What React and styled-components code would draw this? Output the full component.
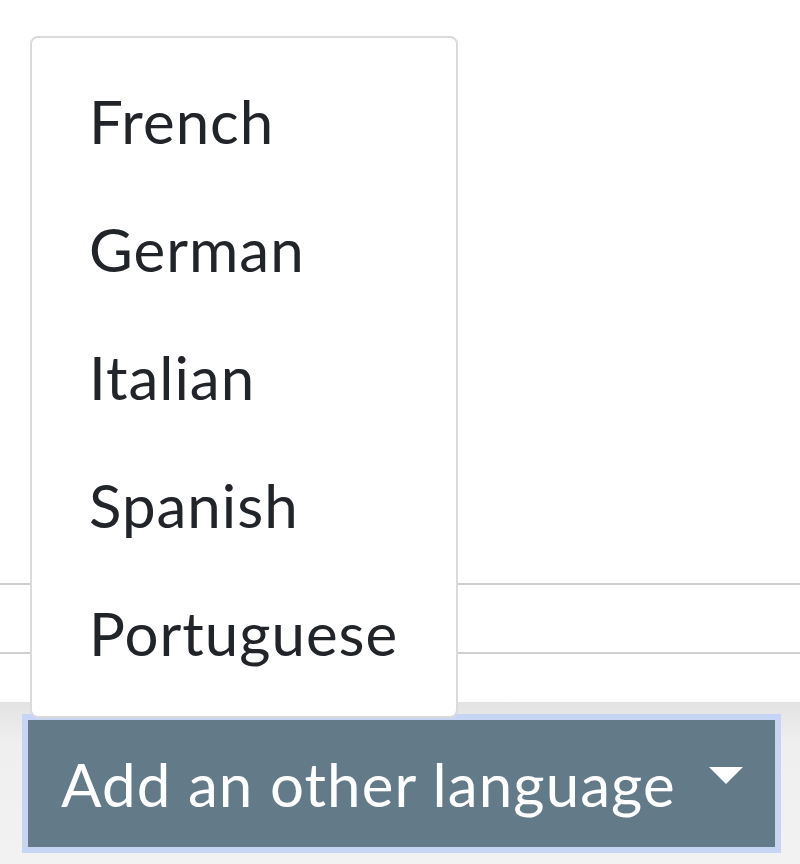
import React from 'react'
import styled, { createGlobalStyle } from 'styled-components'

/* Page reset: no body margin, one font for the whole screen */
const GlobalStyle = createGlobalStyle`
  html, body {
    margin: 0;
    padding: 0;
    background: #ffffff;
  }
  body {
    font-family: Lato, "Noto Sans", "Liberation Sans", sans-serif;
  }
`

const Page = styled.div`
  display: flex;
  flex-direction: column;
  height: 864px;
  overflow: hidden;
  background: #ffffff;
`

/* Table rows of the form behind the open menu */
const Content = styled.div`
  flex: 1;
  display: flex;
  flex-direction: column;
  justify-content: flex-end;
  padding-bottom: 48px;
`

const Row = styled.div`
  height: 67px;
  border-top: 2px solid #d0d0d0;
  border-bottom: 2px solid #d0d0d0;
`

/* Grey band at the bottom holding the dropdown button */
const Footer = styled.div`
  height: 162px;
  box-sizing: border-box;
  padding: 18px 25px 17px 28px;
  background: linear-gradient(to bottom, #e3e3e3 0%, #efefef 25%, #f2f2f2 100%);
`

const Dropdown = styled.div`
  position: relative;
  height: 100%;
`

const Toggle = styled.button`
  display: flex;
  align-items: center;
  justify-content: space-between;
  width: 100%;
  height: 100%;
  box-sizing: border-box;
  padding: 0 32px 0 33px;
  border: none;
  border-radius: 0;
  background: #637a88;
  box-shadow: 0 0 0 6px #c6d5f4;
  color: #ffffff;
  font-family: inherit;
  font-size: 60px;
  font-weight: 400;
  letter-spacing: 1.1px;
  cursor: pointer;
  outline: none;
`

const Caret = styled.span`
  width: 0;
  height: 0;
  border-left: 17px solid transparent;
  border-right: 17px solid transparent;
  border-top: 17px solid #ffffff;
  margin-top: -16px;
`

/* The open menu sits over the rows and the band */
const Menu = styled.ul`
  position: absolute;
  left: 2px;
  bottom: calc(100% + 2px);
  width: 428px;
  box-sizing: border-box;
  margin: 0;
  padding: 19px 0;
  list-style: none;
  background: #ffffff;
  border: 2px solid #dadada;
  border-radius: 8px;
  z-index: 2;
`

const Item = styled.li`
  display: flex;
  align-items: center;
  height: 128px;
  padding-left: 57px;
  color: #212529;
  font-size: 60px;
  letter-spacing: 1px;
  cursor: pointer;
`

const languages = ['French', 'German', 'Italian', 'Spanish', 'Portuguese']

export default function App() {
  return (
    <Page>
      <GlobalStyle />
      <Content>
        <Row />
      </Content>
      <Footer>
        <Dropdown>
          <Menu>
            {languages.map((lang) => (
              <Item key={lang}>{lang}</Item>
            ))}
          </Menu>
          <Toggle>
            <span>Add an other language</span>
            <Caret />
          </Toggle>
        </Dropdown>
      </Footer>
    </Page>
  )
}
